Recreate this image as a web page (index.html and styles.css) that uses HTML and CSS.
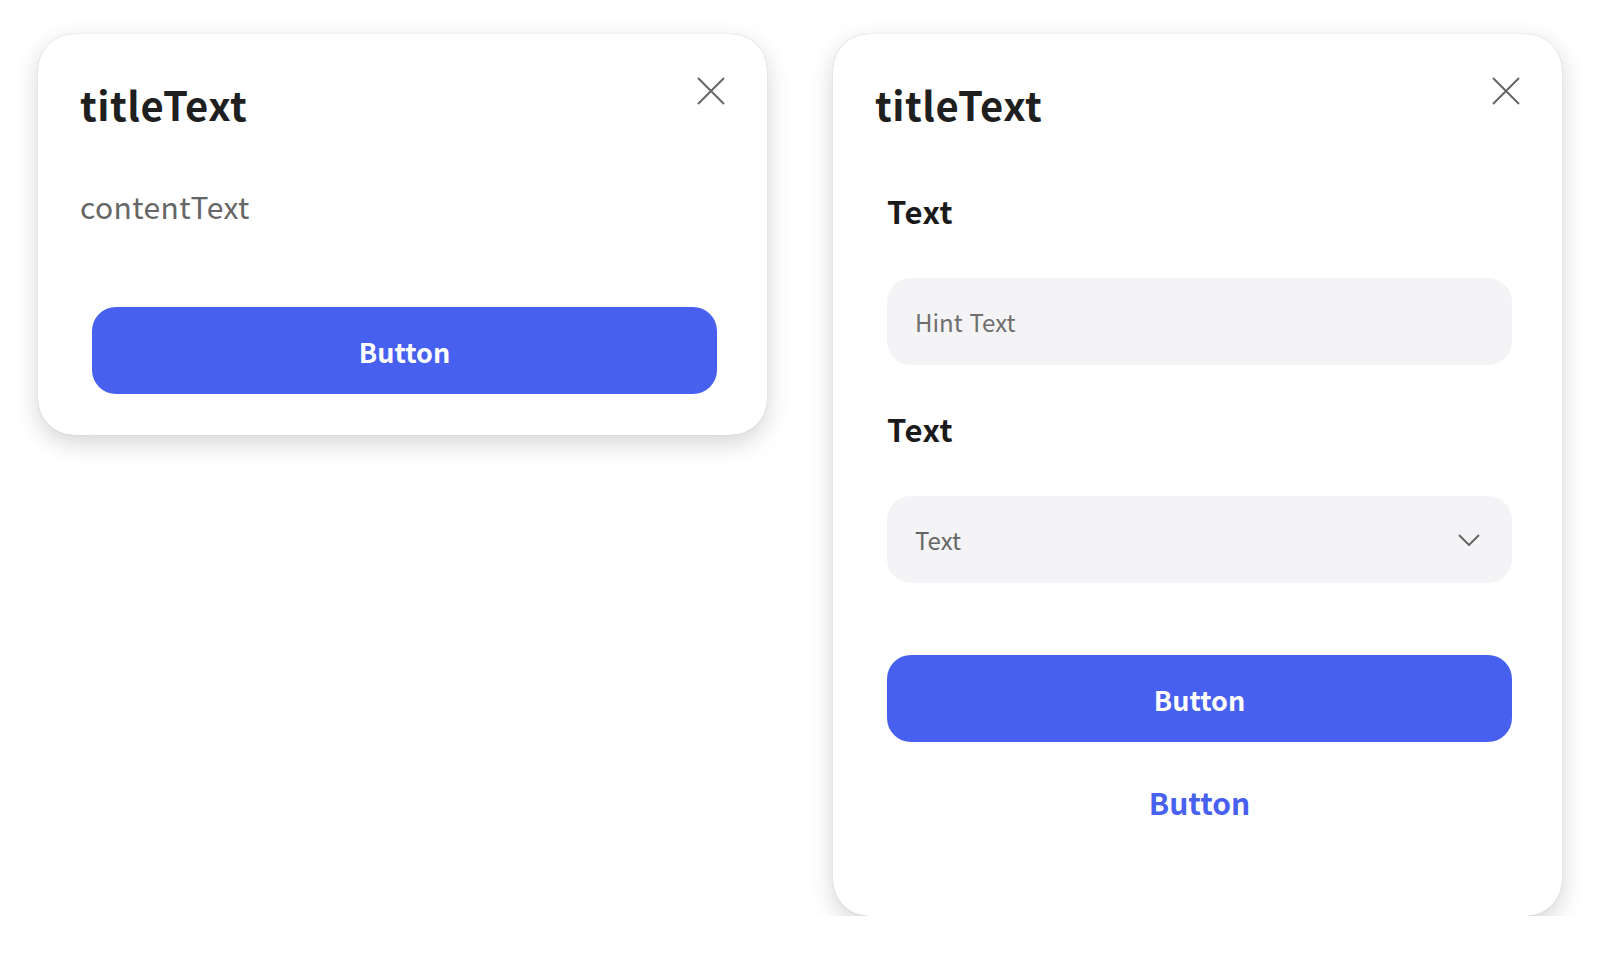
FILE: index.html
```html
<!DOCTYPE html>
<html lang="ko">
<head>
    <meta charset="UTF-8">
    <meta name="viewport" content="width=device-width, initial-scale=1.0">
    <title>Dialogs</title>

    <link rel="stylesheet" href="styles.css">
</head>
<body>

    <section class="pagina">

        <!-- dialogo simple -->
        <div class="dialogo dialogoSimple">
            <div class="cabecera">
                <h1 class="titulo">titleText</h1>
                <button class="cerrar" type="button" aria-label="close">
                    <svg width="28" height="28" viewBox="0 0 28 28"><path d="M1 1 L27 27 M27 1 L1 27" stroke="#666" stroke-width="2" fill="none"/></svg>
                </button>
            </div>
            <div class="cuerpo">
                <p class="contenido">contentText</p>
                <button class="boton" type="button">Button</button>
            </div>
        </div>

        <!-- dialogo con formulario -->
        <div class="dialogo dialogoForm">
            <div class="cabecera">
                <h1 class="titulo">titleText</h1>
                <button class="cerrar" type="button" aria-label="close">
                    <svg width="28" height="28" viewBox="0 0 28 28"><path d="M1 1 L27 27 M27 1 L1 27" stroke="#666" stroke-width="2" fill="none"/></svg>
                </button>
            </div>
            <div class="cuerpo">
                <p class="etiqueta primera">Text</p>
                <input class="campo" type="text" placeholder="Hint Text">

                <p class="etiqueta">Text</p>
                <div class="campo selector">
                    <span>Text</span>
                    <svg width="22" height="12" viewBox="0 0 22 12"><polyline points="1,1 11,11 21,1" stroke="#666" stroke-width="2" fill="none"/></svg>
                </div>

                <button class="boton botonForm" type="button">Button</button>
                <button class="botonTexto" type="button">Button</button>
            </div>
        </div>

    </section>

</body>
</html>
```

FILE: styles.css
```css
body{
    margin: 0;
    background-color: #ffffff;
    font-family: "Noto Sans CJK KR", "Noto Sans", sans-serif;
}

.pagina{
    display: flex;
    align-items: flex-start;
    gap: 66px;
    padding: 34px 0 0 38px;
}

.dialogo{
    width: 729px;
    box-sizing: border-box;
    padding: 47px 42px 41px 42px;
    background-color: #ffffff;
    border-radius: 36px;
    box-shadow: 0 0 1px rgba(0, 0, 0, 0.25), 0 8px 24px rgba(0, 0, 0, 0.17);
}

.dialogoForm{
    padding-bottom: 94px;
}

.cabecera{
    display: flex;
    justify-content: space-between;
    align-items: flex-start;
}

.titulo{
    margin: 0;
    font-size: 40px;
    line-height: 47px;
    font-weight: 700;
    letter-spacing: 0.5px;
    color: #1f1f1f;
}

.cerrar{
    margin-top: -4px;
    padding: 0;
    border: none;
    background: none;
    width: 28px;
    height: 28px;
}

.cerrar svg{
    display: block;
}

.cuerpo{
    display: flex;
    flex-direction: column;
    margin: 0 8px 0 12px;
}

.contenido{
    margin: 58px 0 0 -12px;
    font-size: 30px;
    line-height: 40px;
    letter-spacing: 0.4px;
    color: #666666;
}

.boton{
    margin-top: 81px;
    height: 87px;
    border: none;
    border-radius: 24px;
    background-color: #4760ef;
    color: #ffffff;
    font-family: inherit;
    font-size: 27px;
    font-weight: 700;
    line-height: 87px;
}

.etiqueta{
    margin: 44px 0 47px 0;
    font-size: 31px;
    line-height: 40px;
    font-weight: 700;
    letter-spacing: 0.6px;
    color: #1a1a1a;
}

.etiqueta.primera{
    margin-top: 63px;
}

.campo{
    height: 87px;
    box-sizing: border-box;
    padding: 0 32px 0 28px;
    border: none;
    border-radius: 24px;
    background-color: #f4f4f6;
    font-family: inherit;
    font-size: 24px;
    color: #666666;
    outline: none;
}

.campo::placeholder{
    color: #6e6e6e;
}

.selector{
    display: flex;
    align-items: center;
    justify-content: space-between;
}

.botonForm{
    margin-top: 72px;
}

.botonTexto{
    margin-top: 40px;
    padding: 0;
    border: none;
    background: none;
    color: #4760ef;
    font-family: inherit;
    font-size: 30px;
    font-weight: 700;
    line-height: 40px;
}
```
